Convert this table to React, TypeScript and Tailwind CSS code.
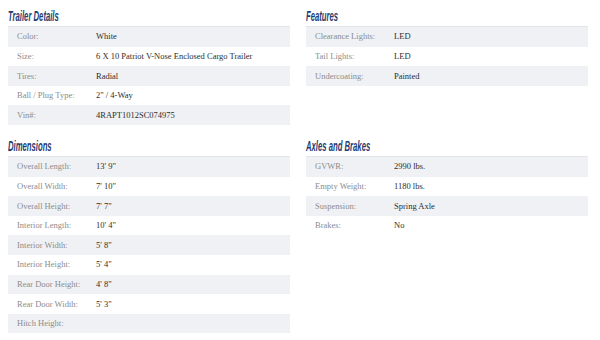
import * as React from "react";

type Row = [string, string];

const trailer: Row[] = [
  ["Color:", "White"],
  ["Size:", "6 X 10 Patriot V-Nose Enclosed Cargo Trailer"],
  ["Tires:", "Radial"],
  ["Ball / Plug Type:", "2\" / 4-Way"],
  ["Vin#:", "4RAPT1012SC074975"],
];

const features: Row[] = [
  ["Clearance Lights:", "LED"],
  ["Tail Lights:", "LED"],
  ["Undercoating:", "Painted"],
];

const dimensions: Row[] = [
  ["Overall Length:", "13' 9\""],
  ["Overall Width:", "7' 10\""],
  ["Overall Height:", "7' 7\""],
  ["Interior Length:", "10' 4\""],
  ["Interior Width:", "5' 8\""],
  ["Interior Height:", "5' 4\""],
  ["Rear Door Height:", "4' 8\""],
  ["Rear Door Width:", "5' 3\""],
  ["Hitch Height:", ""],
];

const axles: Row[] = [
  ["GVWR:", "2990 lbs."],
  ["Empty Weight:", "1180 lbs."],
  ["Suspension:", "Spring Axle"],
  ["Brakes:", "No"],
];

function SpecTable({ title, rows }: { title: string; rows: Row[] }) {
  return (
    <div>
      <div className="flex h-[26px] items-start pt-[9px]">
        <h3 className="origin-left scale-x-[0.55] whitespace-nowrap font-['Liberation_Sans',sans-serif] text-[14px] leading-[14px] font-bold italic text-[#1f3d72]">
          {title}
        </h3>
      </div>
      <div className="border-t border-[#e3e5ea]">
        {rows.map(([label, value], i) => (
          <div
            key={label}
            className={`flex h-[19.6px] items-center font-['Liberation_Serif',serif] text-[8.5px] ${
              i % 2 === 0 ? "bg-[#f0f1f4]" : "bg-white"
            }`}
          >
            <span className="w-[88px] shrink-0 pl-[9px] text-[#8c8c8c]">{label}</span>
            <span className="text-[#2e2e2e]">{value}</span>
          </div>
        ))}
      </div>
    </div>
  );
}

export default function App() {
  return (
    <div className="h-[340px] w-[600px] overflow-hidden bg-white pl-2 pr-3">
      <div className="grid grid-cols-2 gap-x-4 gap-y-[5px]">
        <SpecTable title="Trailer Details" rows={trailer} />
        <SpecTable title="Features" rows={features} />
        <SpecTable title="Dimensions" rows={dimensions} />
        <SpecTable title="Axles and Brakes" rows={axles} />
      </div>
    </div>
  );
}
